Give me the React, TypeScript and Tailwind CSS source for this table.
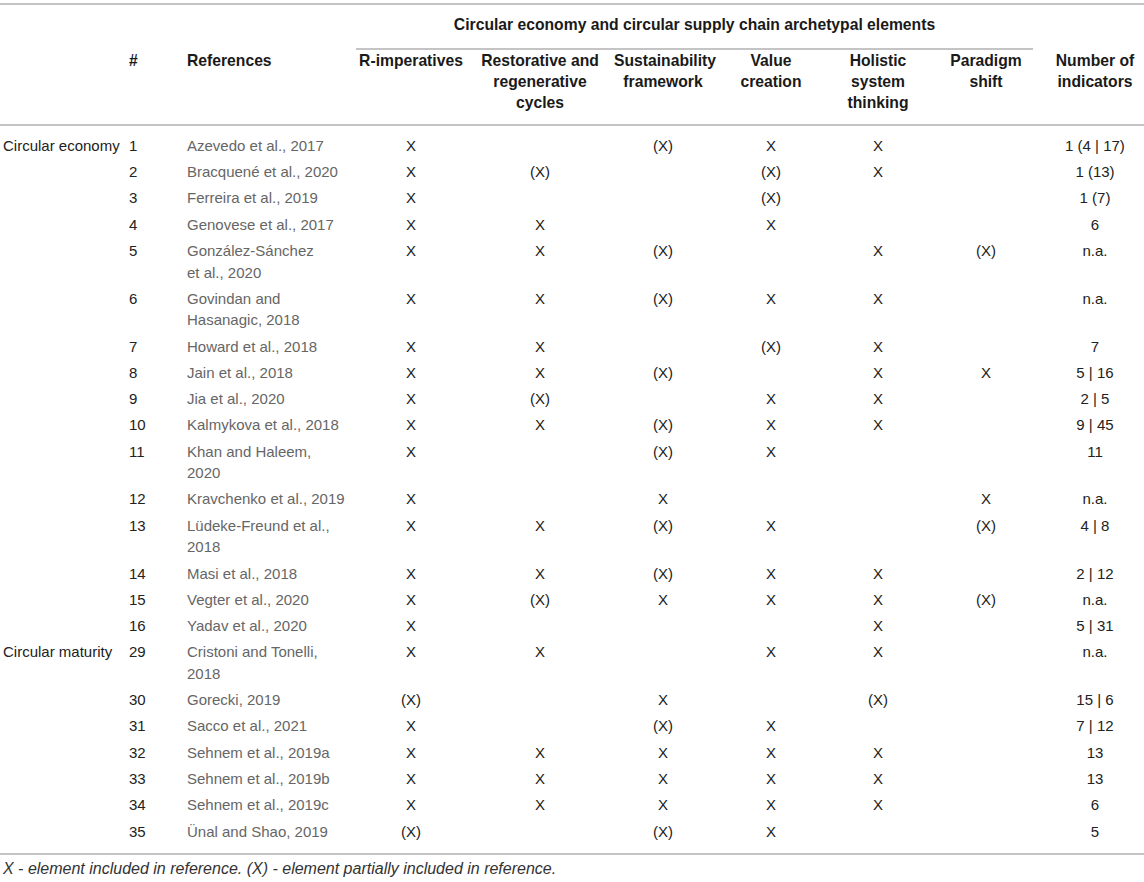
const cols = "grid grid-cols-[126px_57px_173px_110px_148px_98px_118px_96px_120px_98px]";

type Row = {
  label?: string;
  n: number;
  ref: string[];
  marks: string[];
  count: string;
};

const rows: Row[] = [
  { label: "Circular economy", n: 1, ref: ["Azevedo et al., 2017"], marks: ["X", "", "(X)", "X", "X", ""], count: "1 (4 | 17)" },
  { n: 2, ref: ["Bracquené et al., 2020"], marks: ["X", "(X)", "", "(X)", "X", ""], count: "1 (13)" },
  { n: 3, ref: ["Ferreira et al., 2019"], marks: ["X", "", "", "(X)", "", ""], count: "1 (7)" },
  { n: 4, ref: ["Genovese et al., 2017"], marks: ["X", "X", "", "X", "", ""], count: "6" },
  { n: 5, ref: ["González-Sánchez", "et al., 2020"], marks: ["X", "X", "(X)", "", "X", "(X)"], count: "n.a." },
  { n: 6, ref: ["Govindan and", "Hasanagic, 2018"], marks: ["X", "X", "(X)", "X", "X", ""], count: "n.a." },
  { n: 7, ref: ["Howard et al., 2018"], marks: ["X", "X", "", "(X)", "X", ""], count: "7" },
  { n: 8, ref: ["Jain et al., 2018"], marks: ["X", "X", "(X)", "", "X", "X"], count: "5 | 16" },
  { n: 9, ref: ["Jia et al., 2020"], marks: ["X", "(X)", "", "X", "X", ""], count: "2 | 5" },
  { n: 10, ref: ["Kalmykova et al., 2018"], marks: ["X", "X", "(X)", "X", "X", ""], count: "9 | 45" },
  { n: 11, ref: ["Khan and Haleem,", "2020"], marks: ["X", "", "(X)", "X", "", ""], count: "11" },
  { n: 12, ref: ["Kravchenko et al., 2019"], marks: ["X", "", "X", "", "", "X"], count: "n.a." },
  { n: 13, ref: ["Lüdeke-Freund et al.,", "2018"], marks: ["X", "X", "(X)", "X", "", "(X)"], count: "4 | 8" },
  { n: 14, ref: ["Masi et al., 2018"], marks: ["X", "X", "(X)", "X", "X", ""], count: "2 | 12" },
  { n: 15, ref: ["Vegter et al., 2020"], marks: ["X", "(X)", "X", "X", "X", "(X)"], count: "n.a." },
  { n: 16, ref: ["Yadav et al., 2020"], marks: ["X", "", "", "", "X", ""], count: "5 | 31" },
  { label: "Circular maturity", n: 29, ref: ["Cristoni and Tonelli,", "2018"], marks: ["X", "X", "", "X", "X", ""], count: "n.a." },
  { n: 30, ref: ["Gorecki, 2019"], marks: ["(X)", "", "X", "", "(X)", ""], count: "15 | 6" },
  { n: 31, ref: ["Sacco et al., 2021"], marks: ["X", "", "(X)", "X", "", ""], count: "7 | 12" },
  { n: 32, ref: ["Sehnem et al., 2019a"], marks: ["X", "X", "X", "X", "X", ""], count: "13" },
  { n: 33, ref: ["Sehnem et al., 2019b"], marks: ["X", "X", "X", "X", "X", ""], count: "13" },
  { n: 34, ref: ["Sehnem et al., 2019c"], marks: ["X", "X", "X", "X", "X", ""], count: "6" },
  { n: 35, ref: ["Ünal and Shao, 2019"], marks: ["(X)", "", "(X)", "X", "", ""], count: "5" },
];

const headers = [
  ["R-imperatives"],
  ["Restorative and", "regenerative", "cycles"],
  ["Sustainability", "framework"],
  ["Value", "creation"],
  ["Holistic", "system", "thinking"],
  ["Paradigm", "shift"],
  ["Number of", "indicators"],
];

function Lines({ lines }: { lines: string[] }) {
  return (
    <>
      {lines.map((l, i) => (
        <div key={i} className="whitespace-nowrap">
          {l}
        </div>
      ))}
    </>
  );
}

export default function App() {
  return (
    <div className="bg-white w-[1144px] min-h-[882px] pt-[3px] text-[15px] text-[#222] font-['Liberation_Sans',Arial,sans-serif]">
      <div className="border-t-2 border-b-2 border-[#c4c4c4]">
        {/* header */}
        <div className={`${cols} font-bold text-[15.7px] leading-[21px] text-[#1a1a1a]`}>
          <div className="col-start-4 col-span-6 mr-[13px] pt-[8.5px] pb-[13px] border-b-2 border-[#c4c4c4] text-center">
            Circular economy and circular supply chain archetypal elements
          </div>
        </div>
        <div className={`${cols} font-bold text-[15.7px] leading-[21px] text-[#1a1a1a] pb-[11px] border-b-2 border-[#c4c4c4]`}>
          <div />
          <div className="pl-[3px]">#</div>
          <div className="pl-[4px]">References</div>
          {headers.map((h, i) => (
            <div key={i} className="text-center">
              <Lines lines={h} />
            </div>
          ))}
        </div>

        {/* body */}
        <div className="pt-[7px] pb-[9px] leading-[21.5px]">
          {rows.map((r) => (
            <div key={r.n} className={`${cols} py-[2.4px]`}>
              <div className="pl-[3px] whitespace-nowrap text-[#222]">{r.label ?? ""}</div>
              <div className="pl-[3px] text-[#222]">{r.n}</div>
              <div className="pl-[4px] text-[#666]">
                <Lines lines={r.ref} />
              </div>
              {r.marks.map((m, i) => (
                <div key={i} className="text-center text-[#222]">
                  {m}
                </div>
              ))}
              <div className="text-center text-[#222] whitespace-nowrap">{r.count}</div>
            </div>
          ))}
        </div>
      </div>
      <p className="mt-[5px] pl-[3px] italic text-[16px] leading-[18px] text-[#333]">
        X - element included in reference. (X) - element partially included in reference.
      </p>
    </div>
  );
}
